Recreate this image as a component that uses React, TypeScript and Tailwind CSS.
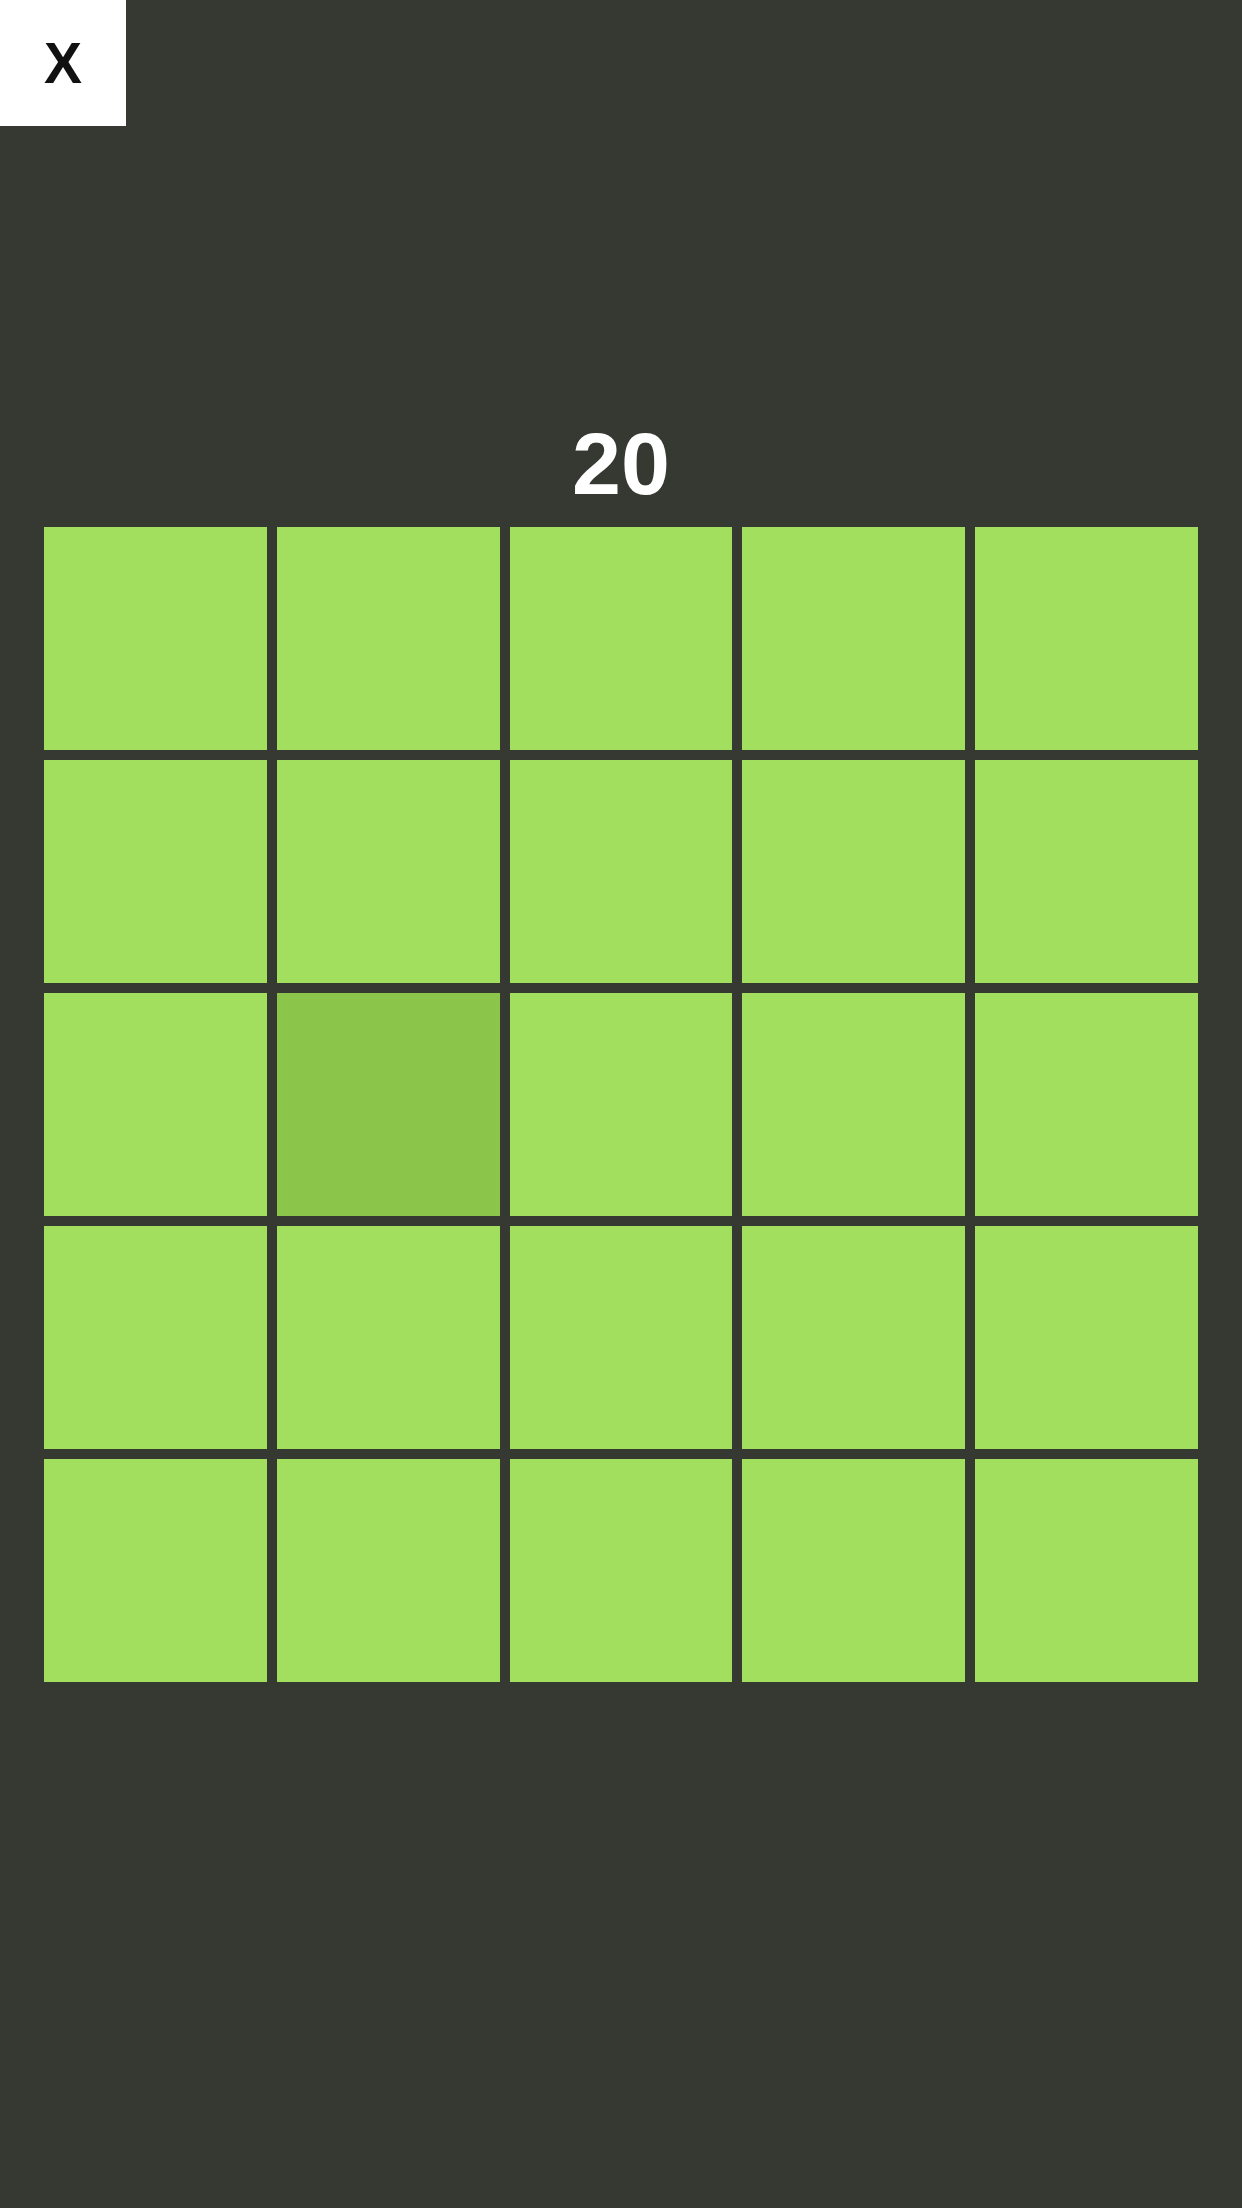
import React from "react";

const highlighted = 11;

export default function App() {
  const cells = Array.from({ length: 25 }, (_, i) => i);

  return (
    <div
      className="min-h-[2208px] w-full bg-[#363832] flex flex-col"
      style={{ fontFamily: '"Liberation Sans", Arial, sans-serif' }}
    >
      {/* CLOSE BUTTON */}
      <button className="w-[126px] h-[126px] bg-white flex items-center justify-center text-[57px] font-bold text-[#111111] leading-none">
        X
      </button>

      {/* SCORE */}
      <div className="mt-[294px] text-center text-white font-bold text-[88px] leading-none">
        20
      </div>

      {/* GRID */}
      <div className="mt-[19px] mx-[44px] grid grid-cols-5 gap-[10px] w-[1154px]">
        {cells.map((i) => (
          <div
            key={i}
            className={
              i === highlighted
                ? "h-[223px] bg-[#8bc64a]"
                : "h-[223px] bg-[#a2df5e]"
            }
          />
        ))}
      </div>
    </div>
  );
}
